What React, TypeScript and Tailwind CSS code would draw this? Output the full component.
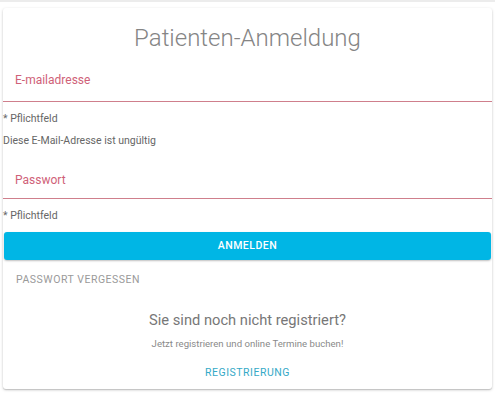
export default function App() {
  return (
    <div className="h-[400px] w-[495px] bg-white font-['Roboto',sans-serif]">
      <div className="h-[2px] bg-[#ececec]" />
      <div className="px-[3px] pt-[6px]">
        <div className="rounded-[3px] bg-white pb-[8px] shadow-[0_1px_3px_rgba(0,0,0,0.2),0_1px_1px_rgba(0,0,0,0.12)]">
          <h1 className="pt-[10px] text-center text-[24px] font-light leading-[40px] text-[#858585]">
            Patienten-Anmeldung
          </h1>

          <div className="mt-[9px] border-b border-[#cf7f8c] px-3 pb-[10px]">
            <span className="text-[12px] leading-[20px] text-[#cf6178]">E-mailadresse</span>
          </div>
          <p className="mt-[9px] text-[10.5px] leading-[16px] text-[#666]">* Pflichtfeld</p>
          <p className="mt-[6px] text-[10.5px] leading-[16px] text-[#666]">
            Diese E-Mail-Adresse ist ungültig
          </p>

          <div className="mt-[18px] border-b border-[#cf7f8c] px-3 pb-[7px]">
            <span className="text-[12px] leading-[20px] text-[#cf6178]">Passwort</span>
          </div>
          <p className="mt-[9px] text-[10.5px] leading-[16px] text-[#666]">* Pflichtfeld</p>

          <button className="mx-px mt-[8px] block h-[28px] w-[calc(100%-2px)] rounded-[3px] bg-[#00b6e5] text-[10.5px] font-medium tracking-[0.05em] text-white shadow-[0_1px_2px_rgba(0,0,0,0.25)]">
            ANMELDEN
          </button>

          <div className="mt-[12px] px-[13px] text-[10.5px] leading-[16px] tracking-[0.05em] text-[#9a9a9a]">
            PASSWORT VERGESSEN
          </div>

          <div className="mt-[21px] text-center text-[14.7px] leading-[22px] text-[#777]">
            Sie sind noch nicht registriert?
          </div>
          <div className="mt-[5px] text-center text-[9.6px] leading-[16px] text-[#8a8a8a]">
            Jetzt registrieren und online Termine buchen!
          </div>
          <div className="mt-[13px] text-center text-[10.5px] leading-[16px] tracking-[0.05em] text-[#35a9c7]">
            REGISTRIERUNG
          </div>
        </div>
      </div>
    </div>
  );
}
